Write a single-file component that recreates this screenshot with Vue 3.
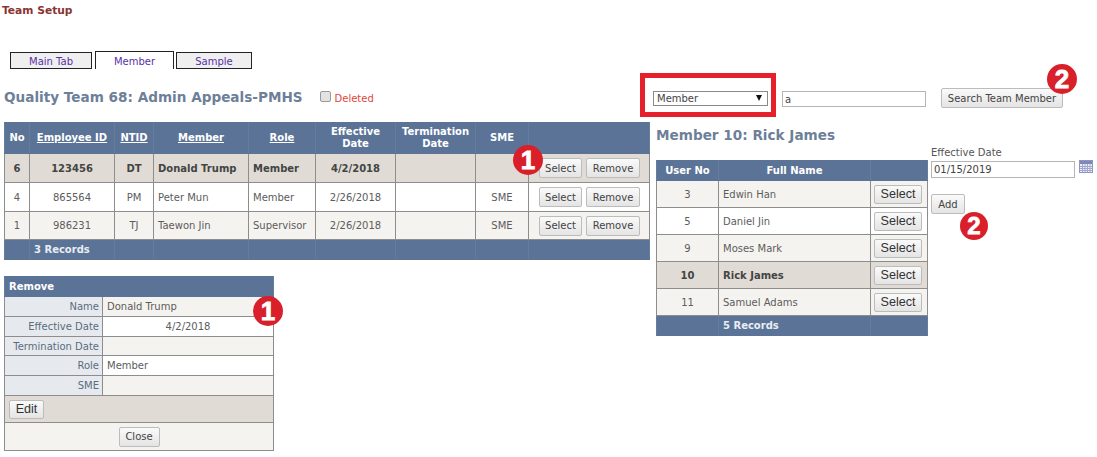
<script setup>
const mainRows = [
  { no: 6, id: '123456', ntid: 'DT', member: 'Donald Trump', role: 'Member', date: '4/2/2018', sme: '', cls: 'sel h29' },
  { no: 4, id: '865564', ntid: 'PM', member: 'Peter Mun', role: 'Member', date: '2/26/2018', sme: 'SME', cls: 'plain h29' },
  { no: 1, id: '986231', ntid: 'TJ', member: 'Taewon Jin', role: 'Supervisor', date: '2/26/2018', sme: 'SME', cls: 'alt h28' },
]
const users = [
  { no: 3, name: 'Edwin Han', cls: 'alt' },
  { no: 5, name: 'Daniel Jin', cls: 'plain' },
  { no: 9, name: 'Moses Mark', cls: 'alt' },
  { no: 10, name: 'Rick James', cls: 'sel' },
  { no: 11, name: 'Samuel Adams', cls: 'alt' },
]
const details = [
  { label: 'Name', value: 'Donald Trump', cls: 'alt h20' },
  { label: 'Effective Date', value: '4/2/2018', cls: 'plain center h20' },
  { label: 'Termination Date', value: '', cls: 'alt h19' },
  { label: 'Role', value: 'Member', cls: 'plain h20' },
  { label: 'SME', value: '', cls: 'alt h20' },
]
const tabs = ['Main Tab', 'Member', 'Sample']
</script>

<template>
  <div class="page">
    <div class="title">Team Setup</div>

    <div class="tabs">
      <div v-for="(t, i) in tabs" :key="t" class="tab" :class="['tab' + i, { active: i === 1 }]">{{ t }}</div>
    </div>

    <div class="head-row">
      <div class="team-head">
        <h2 class="h-team">Quality Team 68: Admin Appeals-PMHS</h2>
        <span class="cb"></span>
        <span class="deleted">Deleted</span>
      </div>
      <div class="search">
        <div class="select">Member<span class="arrow"></span></div>
        <input class="txt search-txt" value="a" />
        <button class="btn search-btn">Search Team Member</button>
      </div>
    </div>

    <div class="columns">
      <div class="left">
        <table class="grid main">
          <colgroup>
            <col style="width:25px" /><col style="width:85px" /><col style="width:39px" /><col style="width:95px" />
            <col style="width:67px" /><col style="width:80px" /><col style="width:80px" /><col style="width:53px" /><col style="width:121px" />
          </colgroup>
          <thead>
            <tr class="h31">
              <th>No</th><th class="u">Employee ID</th><th class="u">NTID</th><th class="u">Member</th><th class="u">Role</th>
              <th>Effective<br />Date</th><th>Termination<br />Date</th><th>SME</th><th></th>
            </tr>
          </thead>
          <tbody>
            <tr v-for="r in mainRows" :key="r.no" :class="r.cls">
              <td class="c">{{ r.no }}</td><td class="c">{{ r.id }}</td><td class="c">{{ r.ntid }}</td>
              <td>{{ r.member }}</td><td>{{ r.role }}</td><td class="c">{{ r.date }}</td><td></td>
              <td class="c">{{ r.sme }}</td>
              <td class="actions"><button class="btn">Select</button><button class="btn">Remove</button></td>
            </tr>
          </tbody>
          <tfoot>
            <tr class="h20"><td></td><td colspan="1" class="foot-main">3 Records</td><td></td><td></td><td></td><td></td><td></td><td></td><td></td></tr>
          </tfoot>
        </table>

        <table class="grid detail">
          <colgroup><col style="width:98px" /><col style="width:171px" /></colgroup>
          <thead><tr class="h20"><th colspan="2" class="lft">Remove</th></tr></thead>
          <tbody>
            <tr v-for="d in details" :key="d.label" :class="d.cls">
              <td class="lab">{{ d.label }}</td>
              <td :class="{ c: d.cls.includes('center') }">{{ d.value }}</td>
            </tr>
            <tr class="sel h27"><td colspan="2" class="edit"><button class="btn arial edit-btn">Edit</button></td></tr>
            <tr class="alt h28"><td colspan="2" class="c"><button class="btn close-btn">Close</button></td></tr>
          </tbody>
        </table>
      </div>

      <div class="right">
        <div class="member-col">
          <h2 class="h-member">Member 10: Rick James</h2>
          <table class="grid users">
            <colgroup><col style="width:62px" /><col style="width:152px" /><col style="width:57px" /></colgroup>
            <thead><tr class="h20"><th>User No</th><th>Full Name</th><th></th></tr></thead>
            <tbody>
              <tr v-for="u in users" :key="u.no" class="h27" :class="u.cls">
                <td class="c">{{ u.no }}</td><td>{{ u.name }}</td>
                <td class="btn-cell"><button class="btn arial sel-btn">Select</button></td>
              </tr>
            </tbody>
            <tfoot><tr class="h20"><td></td><td>5 Records</td><td></td></tr></tfoot>
          </table>
        </div>
        <div class="date-col">
          <label class="date-label">Effective Date</label>
          <div class="date-row">
            <input class="txt date-txt" value="01/15/2019" />
            <svg class="cal" width="14" height="13" viewBox="0 0 14 13">
              <rect x="0.5" y="0.5" width="13" height="12" fill="#eef0f8" stroke="#8d96bd" />
              <rect x="1" y="1" width="12" height="3" fill="#7f88b8" />
              <path d="M1 6.5H13M1 8.5H13M1 10.5H13M3.5 4V12M6 4V12M8.5 4V12M11 4V12" stroke="#a3a6d0" stroke-width="1" fill="none" />
            </svg>
          </div>
          <button class="btn add-btn">Add</button>
        </div>
      </div>
    </div>

    <div class="redbox"></div>
    <div class="badge b1">1</div>
    <div class="badge b2">1</div>
    <div class="badge b3">2</div>
    <div class="badge b4">2</div>
  </div>
</template>

<style scoped>
.page {
  position: relative;
  width: 1097px;
  height: 457px;
  overflow: hidden;
  background: #fff;
  font-family: "DejaVu Sans", Verdana, sans-serif;
  font-size: 10px;
  color: #5c5c5c;
}
.title {
  height: 15px;
  line-height: 15px;
  padding: 3px 0 0 2px;
  font-size: 10.7px;
  font-weight: bold;
  color: #8a3433;
}
.tabs {
  display: flex;
  align-items: flex-end;
  margin: 34px 0 0 10px;
  height: 17px;
}
.tab {
  box-sizing: border-box;
  height: 17px;
  line-height: 17px;
  text-align: center;
  background: #efefef;
  border: 1px solid #222;
  color: #5a2fa8;
  font-size: 10px;
}
.tab0 { width: 82px; margin-right: 3px; }
.tab1 { width: 79px; margin-right: 2px; }
.tab2 { width: 76px; }
.tab.active { background: #fff; border-bottom: 0; height: 18px; line-height: 19px; }

.head-row {
  display: flex;
  justify-content: space-between;
  height: 53px;
}
.team-head {
  display: flex;
  align-items: flex-start;
  padding: 19px 0 0 4px;
}
.h-team, .h-member {
  margin: 0;
  font-size: 13.6px;
  line-height: 18px;
  font-weight: bold;
  color: #6d7f99;
}
.cb {
  box-sizing: border-box;
  width: 11px;
  height: 11px;
  margin: 3px 0 0 17px;
  background: #e3e3e3;
  border: 1px solid #9a9a9a;
  border-radius: 2px;
}
.deleted {
  margin: 4px 0 0 4px;
  color: #e0473c;
  line-height: 13px;
}
.search {
  display: flex;
  align-items: flex-start;
  width: 444px;
  padding-top: 20px;
}
.select {
  position: relative;
  box-sizing: border-box;
  width: 115px;
  height: 15px;
  margin-top: 2px;
  padding-left: 3px;
  line-height: 14px;
  background: #fff;
  border: 1px solid #8a8a8a;
  color: #444;
}
.arrow {
  position: absolute;
  right: 5px;
  top: 3px;
  border-left: 3px solid transparent;
  border-right: 3px solid transparent;
  border-top: 6px solid #111;
}
.txt {
  box-sizing: border-box;
  height: 16px;
  padding: 0 2px;
  border: 1px solid #b5b5b5;
  background: #fff;
  font: 10px "DejaVu Sans", Verdana, sans-serif;
  color: #444;
  outline: none;
}
.search-txt { width: 144px; margin: 2px 0 0 14px; }
.btn {
  box-sizing: border-box;
  height: 20px;
  padding: 0;
  border: 1px solid #bcbcbc;
  border-radius: 2px;
  background: linear-gradient(#fafafa, #e4e4e4);
  font: 10px "DejaVu Sans", Verdana, sans-serif;
  color: #444;
}
.search-btn { width: 122px; margin: -1px 0 0 15px; }

.columns { display: flex; align-items: flex-start; padding-left: 4px; }
.left { width: 652px; }
.grid {
  border-collapse: collapse;
  table-layout: fixed;
}
.main { width: 645px; }
.grid th, .grid td {
  box-sizing: border-box;
  padding: 0 4px;
  border: 1px solid #8d8d8d;
  overflow: hidden;
  white-space: nowrap;
}
.grid th {
  background: #5b7396;
  color: #fff;
  font-weight: bold;
  line-height: 12px;
  text-align: center;
  border-color: #667c9c;
  border-top-color: #5b7396;
  border-bottom-color: #5b7396;
}
.grid th.lft { text-align: left; }
.grid th.u { text-decoration: underline; }
.grid tfoot td {
  background: #5b7396;
  color: #e8edf4;
  font-weight: bold;
  border-color: #667c9c;
  border-bottom-color: #5b7396;
}
.foot-main { padding-left: 3px; }
.h19 { height: 19px; }
.h20 { height: 20px; }
.h27 { height: 27px; }
.h28 { height: 28px; }
.h29 { height: 29px; }
.h31 { height: 31px; }
.c { text-align: center; }
.alt td { background: #f5f3ef; }
.plain td { background: #fff; }
.sel td { background: #e0dcd5; font-weight: bold; color: #444; }
.main .actions { padding: 0 0 0 10px; }
.actions .btn { width: 43px; margin-right: 4px; vertical-align: middle; }
.actions .btn + .btn { width: 54px; margin-right: 0; }
.arial { font: 12.6px "Liberation Sans", Arial, sans-serif; }

.detail { width: 269px; margin-top: 16px; }
.lab { background: #e6eaef !important; text-align: right; padding-right: 3px !important; color: #5c6a7d; }
.edit { padding: 0 0 0 4px !important; }
.edit-btn { width: 35px; height: 19px; font-weight: normal; color: #333; }
.close-btn { width: 41px; height: 20px; }

.right { display: flex; align-items: flex-start; }
.member-col { width: 275px; }
.h-member { margin-top: 4px; height: 34px; }
.users { width: 271px; }
.users .btn-cell { padding: 0 0 0 3px; }
.sel-btn { display: block; width: 48px; height: 19px; font-weight: normal; color: #333; }
.date-col { padding-top: 24px; }
.date-label { display: block; height: 15px; line-height: 13px; color: #555; }
.date-row { display: flex; align-items: flex-start; }
.date-txt { width: 144px; height: 17px; }
.cal { margin: -1px 0 0 4px; }
.add-btn { display: block; width: 34px; margin-top: 16px; }

.redbox {
  position: absolute;
  left: 640px;
  top: 73px;
  width: 136px;
  height: 44px;
  box-sizing: border-box;
  border: 5px solid #e5202a;
}
.badge {
  position: absolute;
  width: 30px;
  height: 30px;
  border-radius: 50%;
  background: #d9202a;
  color: #fff;
  text-align: center;
  font: bold 26px/30px "Liberation Sans", Arial, sans-serif;
  -webkit-text-stroke: 0.8px #fff;
}
.b1 { left: 513px; top: 145px; }
.b2 { left: 253px; top: 296px; }
.b3 { left: 1047px; top: 64px; }
.b4 { left: 960px; top: 212px; width: 28px; height: 28px; font-size: 24px; line-height: 28px; }
</style>
